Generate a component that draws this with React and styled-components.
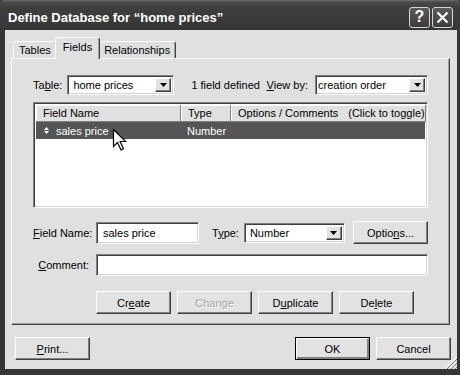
import React from "react";
import styled, { createGlobalStyle, css } from "styled-components";

const GlobalStyle = createGlobalStyle`
  html, body {
    margin: 0;
    padding: 0;
    background: #3a3a3a;
  }
  body {
    font-family: "Liberation Sans", Arial, sans-serif;
    font-size: 11px;
    color: #000;
  }
`;

const Window = styled.div`
  width: 460px;
  height: 375px;
  display: flex;
  flex-direction: column;
  background: #363636;
  border-radius: 4px 4px 0 0;
  overflow: hidden;
`;

const TitleBar = styled.div`
  height: 30px;
  flex: none;
  box-sizing: border-box;
  display: flex;
  align-items: center;
  justify-content: space-between;
  padding: 4px 7px 0 8px;
  background: linear-gradient(#707070 0, #4a4a4a 2px, #3e3e3e 8px, #363636 100%);
  color: #fff;
  font: bold 13px "Liberation Sans", Arial, sans-serif;
`;

const TitleButtons = styled.div`
  display: flex;
  gap: 2px;
`;

const TitleButton = styled.div`
  width: 21px;
  height: 21px;
  box-sizing: border-box;
  border: 1px solid #d6d6d6;
  border-radius: 3px;
  background: linear-gradient(#5a5a5a, #3c3c3c);
  display: flex;
  align-items: center;
  justify-content: center;
  color: #fff;
  font: bold 16px "Liberation Sans", Arial, sans-serif;
`;

const Body = styled.div`
  flex: 1;
  margin: 0 3px 6px 5px;
  background: #e0e0e0;
  display: flex;
  flex-direction: column;
  position: relative;
`;

const TabStrip = styled.div`
  display: flex;
  align-items: flex-end;
  height: 22px;
  margin: 7px 0 -1px;
  padding-left: 8px;
  position: relative;
  z-index: 1;
`;

const Tab = styled.div`
  height: 17px;
  box-sizing: border-box;
  padding: 2px 5px 0;
  margin-bottom: 1px;
  background: #e0e0e0;
  border: 1px solid;
  border-color: #fff #404040 transparent #fff;
  border-bottom: none;
  border-radius: 3px 3px 0 0;
  box-shadow: inset -1px 0 #a0a0a0;
  white-space: nowrap;

  ${(p) =>
    p.$active &&
    css`
      height: 22px;
      margin: 0 -2px;
      padding: 3px 7px 0;
      position: relative;
      z-index: 2;
    `}
`;

const Panel = styled.div`
  height: 267px;
  margin: 0 7px 0 6px;
  box-sizing: border-box;
  padding: 16px 21px 0 21px;
  border: 1px solid;
  border-color: #fff #404040 #404040 #fff;
  box-shadow: inset -1px -1px #a0a0a0;
  display: flex;
  flex-direction: column;
`;

const Key = styled.span`
  text-decoration: underline;
  text-underline-offset: 1px;
`;

const Row = styled.div`
  display: flex;
  align-items: center;
  height: ${(p) => p.$h || 23}px;
  margin-top: ${(p) => p.$top || 0}px;
  flex: none;
`;

const Label = styled.span`
  white-space: nowrap;
  margin-right: ${(p) => p.$gap || 5}px;
  margin-left: ${(p) => p.$left || 0}px;
`;

const FormLabel = styled.span`
  width: 56px;
  margin-right: 7px;
  text-align: right;
  white-space: nowrap;
`;

const Info = styled.span`
  margin-left: 17px;
  white-space: nowrap;
`;

const Group = styled.div`
  margin-left: auto;
  display: flex;
  align-items: center;
`;

const sunken = css`
  box-sizing: border-box;
  border: 1px solid;
  border-color: #808080 #fff #fff #808080;
  box-shadow: inset 1px 1px #404040, inset -1px -1px #d4d4d4;
  background: #fff;
`;

const Select = styled.div`
  ${sunken};
  width: ${(p) => p.$w}px;
  height: ${(p) => p.$h || 20}px;
  display: flex;
  align-items: center;
  justify-content: space-between;
  padding: 2px 2px 2px ${(p) => p.$pad ?? 5}px;
  white-space: nowrap;
`;

const ArrowButton = styled.div`
  width: 16px;
  height: 100%;
  box-sizing: border-box;
  background: #e2e2e2;
  border: 1px solid;
  border-color: #fff #404040 #404040 #fff;
  box-shadow: inset -1px -1px #808080;
  display: flex;
  align-items: center;
  justify-content: center;
`;

const TextInput = styled.div`
  ${sunken};
  width: ${(p) => (p.$w ? `${p.$w}px` : "auto")};
  flex: ${(p) => (p.$w ? "none" : 1)};
  height: 22px;
  display: flex;
  align-items: center;
  padding-left: 6px;
  white-space: nowrap;
`;

const List = styled.div`
  ${sunken};
  margin-top: 7px;
  height: 106px;
  flex: none;
  padding: 2px;
  position: relative;
  overflow: hidden;
`;

const HeaderRow = styled.div`
  display: flex;
  height: 17px;
`;

const HeaderCell = styled.div`
  width: ${(p) => (p.$w ? `${p.$w}px` : "auto")};
  flex: ${(p) => (p.$w ? "none" : 1)};
  box-sizing: border-box;
  background: #e0e0e0;
  border-right: 1px solid #808080;
  border-bottom: 1px solid #808080;
  box-shadow: inset 1px 1px #fff;
  padding: 2px 0 0 7px;
  white-space: nowrap;
`;

const Hint = styled.span`
  margin-left: 10px;
`;

const ListRow = styled.div`
  display: flex;
  height: 17px;
  align-items: center;
  background: ${(p) => (p.$selected ? "#555" : "transparent")};
  color: ${(p) => (p.$selected ? "#fff" : "#000")};
`;

const Cell = styled.div`
  width: ${(p) => p.$w}px;
  flex: none;
  display: flex;
  align-items: center;
  padding-left: ${(p) => p.$pad}px;
  box-sizing: border-box;
  gap: 7px;
  white-space: nowrap;
`;

const Cursor = styled.svg`
  position: absolute;
  left: 78px;
  top: 25px;
`;

const Button = styled.button`
  width: 75px;
  height: 23px;
  box-sizing: border-box;
  padding: 0;
  font: 11px "Liberation Sans", Arial, sans-serif;
  color: #000;
  background: #e2e2e2;
  border: 1px solid;
  border-color: #fff #404040 #404040 #fff;
  box-shadow: inset -1px -1px #808080;
  flex: none;

  ${(p) =>
    p.$default &&
    css`
      border-color: #000;
      box-shadow: inset 1px 1px #fff, inset -2px -2px #808080;
    `}

  &:disabled {
    color: #a3a3a3;
    text-shadow: 1px 1px #fff;
  }
`;

const ButtonRow = styled.div`
  display: flex;
  gap: 6px;
  margin-top: 15px;
  padding-left: 63px;
`;

const Footer = styled.div`
  display: flex;
  gap: 6px;
  padding: 12px 6px 0 10px;
`;

const Spacer = styled.div`
  flex: 1;
`;

const Grip = styled.svg`
  position: absolute;
  right: 0;
  bottom: 0;
`;

const DownArrow = () => (
  <svg width="7" height="4" viewBox="0 0 7 4">
    <path d="M0 0h7L3.5 4z" fill="#000" />
  </svg>
);

const SortIcon = () => (
  <svg width="5" height="7" viewBox="0 0 5 7">
    <path d="M0 3L2.5 0 5 3zM0 4l2.5 3L5 4z" fill="#fff" />
  </svg>
);

const DropDown = ({ w, h, pad, children }) => (
  <Select $w={w} $h={h} $pad={pad}>
    <span>{children}</span>
    <ArrowButton>
      <DownArrow />
    </ArrowButton>
  </Select>
);

export default function App() {
  return (
    <>
      <GlobalStyle />
      <Window>
        <TitleBar>
          <span>Define Database for “home prices”</span>
          <TitleButtons>
            <TitleButton>?</TitleButton>
            <TitleButton>
              <svg width="13" height="13" viewBox="0 0 13 13">
                <path d="M1.5 1.5l10 10M11.5 1.5l-10 10" stroke="#fff" strokeWidth="2.2" />
              </svg>
            </TitleButton>
          </TitleButtons>
        </TitleBar>

        <Body>
          <TabStrip>
            <Tab>Tables</Tab>
            <Tab $active>Fields</Tab>
            <Tab>Relationships</Tab>
          </TabStrip>

          <Panel>
            <Row $h={20}>
              <Label>
                Ta<Key>b</Key>le:
              </Label>
              <DropDown w={107}>home prices</DropDown>
              <Info>1 field defined</Info>
              <Group>
                <Label $gap={7}>
                  <Key>V</Key>iew by:
                </Label>
                <DropDown w={113} pad={2}>
                  creation order
                </DropDown>
              </Group>
            </Row>

            <List>
              <HeaderRow>
                <HeaderCell $w={145}>Field Name</HeaderCell>
                <HeaderCell $w={50}>Type</HeaderCell>
                <HeaderCell>
                  Options / Comments<Hint>(Click to toggle)</Hint>
                </HeaderCell>
              </HeaderRow>
              <ListRow $selected>
                <Cell $w={145} $pad={8}>
                  <SortIcon />
                  sales price
                </Cell>
                <Cell $w={50} $pad={6}>
                  Number
                </Cell>
              </ListRow>
              <Cursor width="15" height="23" viewBox="0 0 15 23">
                <path
                  d="M1.5 1.5v17l4-4 3.5 7.5 2.5-1.2-3.4-7.3h5.6z"
                  fill="#fff"
                  stroke="#000"
                  strokeWidth="1.2"
                  strokeLinejoin="miter"
                />
              </Cursor>
            </List>

            <Row $top={13}>
              <FormLabel>
                <Key>F</Key>ield Name:
              </FormLabel>
              <TextInput $w={103}>sales price</TextInput>
              <Label $left={13}>
                T<Key>y</Key>pe:
              </Label>
              <DropDown w={101}>Number</DropDown>
              <Spacer />
              <Button>
                Optio<Key>n</Key>s...
              </Button>
            </Row>

            <Row $top={10} $h={22}>
              <FormLabel>
                <Key>C</Key>omment:
              </FormLabel>
              <TextInput />
            </Row>

            <ButtonRow>
              <Button>
                Cr<Key>e</Key>ate
              </Button>
              <Button disabled>
                Chan<Key>g</Key>e
              </Button>
              <Button>
                D<Key>u</Key>plicate
              </Button>
              <Button>
                De<Key>l</Key>ete
              </Button>
            </ButtonRow>
          </Panel>

          <Footer>
            <Button>
              <Key>P</Key>rint...
            </Button>
            <Spacer />
            <Button $default>OK</Button>
            <Button>Cancel</Button>
          </Footer>

          <Grip width="12" height="12" viewBox="0 0 12 12">
            <path d="M11 1L1 11M11 5L5 11M11 9L9 11" stroke="#fff" strokeWidth="1" />
            <path d="M12 2L2 12M12 6L6 12M12 10L10 12" stroke="#808080" strokeWidth="1" />
          </Grip>
        </Body>
      </Window>
    </>
  );
}
